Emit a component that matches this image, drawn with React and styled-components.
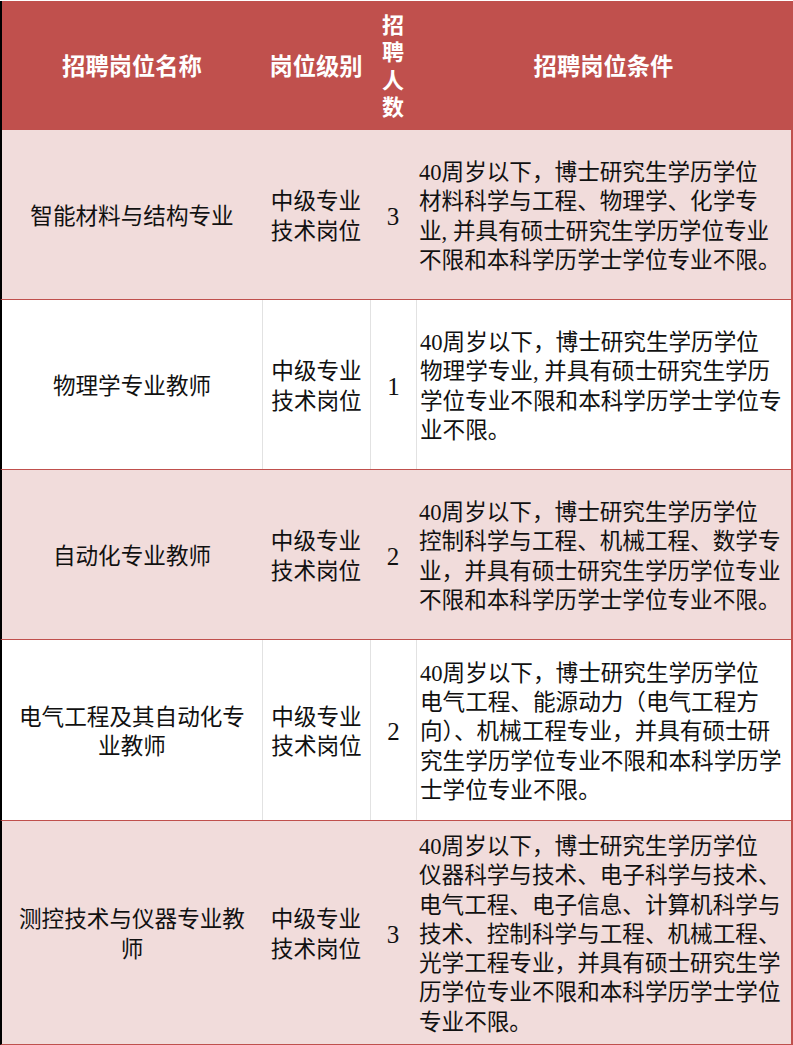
import React from 'react'
import styled, { createGlobalStyle } from 'styled-components'

const GlobalStyle = createGlobalStyle`
  html, body {
    margin: 0;
    padding: 0;
    background: #ffffff;
  }
  body {
    font-family: "Liberation Serif", "Noto Sans CJK SC", serif;
    color: #111111;
  }
`

const rows = [
  {
    name: ['智能材料与结构专业'],
    count: '3',
    height: 170,
    cond: [
      '40周岁以下，博士研究生学历学位',
      '材料科学与工程、物理学、化学专',
      '业, 并具有硕士研究生学历学位专业',
      '不限和本科学历学士学位专业不限。',
    ],
  },
  {
    name: ['物理学专业教师'],
    count: '1',
    height: 170,
    cond: [
      '40周岁以下，博士研究生学历学位',
      '物理学专业, 并具有硕士研究生学历',
      '学位专业不限和本科学历学士学位专',
      '业不限。',
    ],
  },
  {
    name: ['自动化专业教师'],
    count: '2',
    height: 170,
    cond: [
      '40周岁以下，博士研究生学历学位',
      '控制科学与工程、机械工程、数学专',
      '业，并具有硕士研究生学历学位专业',
      '不限和本科学历学士学位专业不限。',
    ],
  },
  {
    name: ['电气工程及其自动化专', '业教师'],
    count: '2',
    height: 181,
    cond: [
      '40周岁以下，博士研究生学历学位',
      '电气工程、能源动力（电气工程方',
      '向）、机械工程专业，并具有硕士研',
      '究生学历学位专业不限和本科学历学',
      '士学位专业不限。',
    ],
  },
  {
    name: ['测控技术与仪器专业教', '师'],
    count: '3',
    height: 224,
    cond: [
      '40周岁以下，博士研究生学历学位',
      '仪器科学与技术、电子科学与技术、',
      '电气工程、电子信息、计算机科学与',
      '技术、控制科学与工程、机械工程、',
      '光学工程专业，并具有硕士研究生学',
      '历学位专业不限和本科学历学士学位',
      '专业不限。',
    ],
  },
]

const Sheet = styled.div`
  width: 793px;
  padding-top: 1px;
  box-sizing: border-box;
`

const Row = styled.div`
  display: grid;
  grid-template-columns: 260px 108px 46px 1fr;
  height: ${(p) => p.$height}px;
  box-sizing: border-box;
  background: ${(p) => (p.$header ? '#c0504d' : p.$shade ? '#f1dcdb' : '#ffffff')};
  border-left: 2px solid #000000;
  border-right: 2px solid #c0504d;
  border-bottom: ${(p) => (p.$header ? 'none' : '1px solid #c0504d')};
`

const Cell = styled.div`
  display: flex;
  align-items: center;
  justify-content: ${(p) => (p.$left ? 'flex-start' : 'center')};
  text-align: ${(p) => (p.$left ? 'left' : 'center')};
  padding-left: ${(p) => (p.$left ? '3px' : '0')};
  padding-top: 4px;
  box-sizing: border-box;
  font-size: ${(p) => (p.$num ? '25px' : '22.6px')};
  line-height: 29.3px;
  white-space: nowrap;
  border-left: ${(p) => (p.$line ? '1px solid #e2e2e2' : 'none')};
  &:first-child {
    border-left: none;
  }
`

const HeadCell = styled.div`
  display: flex;
  align-items: center;
  justify-content: center;
  text-align: center;
  color: #ffffff;
  font-family: "Liberation Serif", "Noto Sans CJK SC", serif;
  font-weight: 700;
  font-size: ${(p) => (p.$narrow ? '22px' : '23.3px')};
  line-height: ${(p) => (p.$narrow ? '27.5px' : '30px')};
  white-space: nowrap;
  padding-top: 2px;
`

const Lines = ({ lines }) =>
  lines.map((l, i) => (
    <React.Fragment key={i}>
      {i > 0 && <br />}
      {l}
    </React.Fragment>
  ))

export default function App() {
  return (
    <>
      <GlobalStyle />
      <Sheet>
        <Row $header $height={129}>
          <HeadCell>招聘岗位名称</HeadCell>
          <HeadCell>岗位级别</HeadCell>
          <HeadCell $narrow>
            <Lines lines={['招', '聘', '人', '数']} />
          </HeadCell>
          <HeadCell>招聘岗位条件</HeadCell>
        </Row>
        {rows.map((r, i) => {
          const shade = i % 2 === 0
          return (
            <Row key={i} $shade={shade} $height={r.height}>
              <Cell>
                <div>
                  <Lines lines={r.name} />
                </div>
              </Cell>
              <Cell $line={!shade}>
                <div>
                  <Lines lines={['中级专业', '技术岗位']} />
                </div>
              </Cell>
              <Cell $line={!shade} $num>
                {r.count}
              </Cell>
              <Cell $line={!shade} $left>
                <div>
                  <Lines lines={r.cond} />
                </div>
              </Cell>
            </Row>
          )
        })}
      </Sheet>
    </>
  )
}
